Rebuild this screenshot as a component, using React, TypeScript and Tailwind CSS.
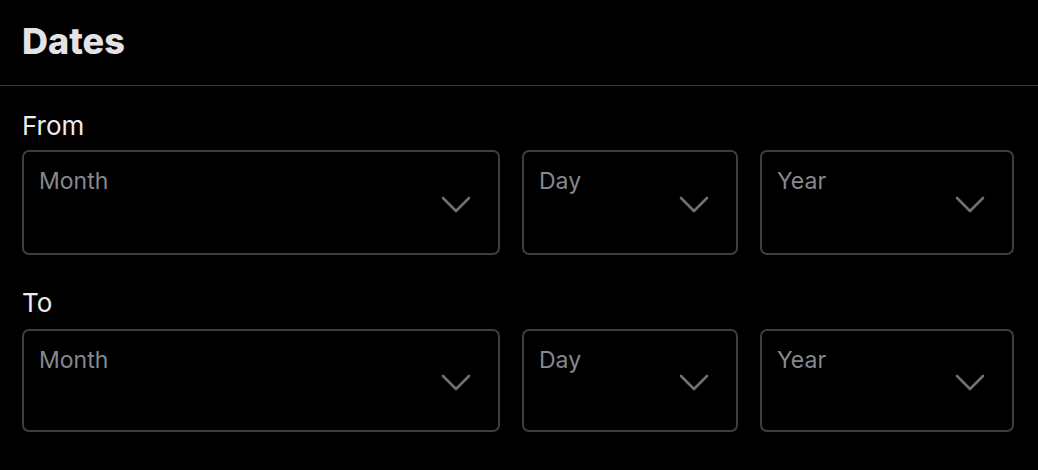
const fields = [
  { label: "Month", width: "w-[478px]" },
  { label: "Day", width: "w-[216px]" },
  { label: "Year", width: "w-[254px]" },
]

function Chevron() {
  return (
    <svg width="30" height="18" viewBox="0 0 30 18" fill="none" className="shrink-0">
      <polyline
        points="2,2 15,15 28,2"
        stroke="#6d7177"
        strokeWidth="2.6"
        strokeLinecap="round"
        strokeLinejoin="round"
      />
    </svg>
  )
}

function DateRow({ label, height, gap }: { label: string; height: string; gap: string }) {
  return (
    <div>
      <div className="text-[26px] leading-none text-[#ececee] pl-[22px]">{label}</div>
      <div className={`flex gap-[22px] pl-[22px] ${gap}`}>
        {fields.map((f) => (
          <div
            key={f.label}
            className={`${f.width} ${height} border-2 border-[#3c3e42] rounded-[7px] flex items-center justify-between pl-[15px] pr-[27px]`}
          >
            <span className="self-start mt-[18px] text-[23px] leading-none text-[#85888e]">{f.label}</span>
            <div className="mt-[4px]">
              <Chevron />
            </div>
          </div>
        ))}
      </div>
    </div>
  )
}

export default function App() {
  return (
    <div className="w-[1038px] h-[470px] bg-black font-['Inter',sans-serif] overflow-hidden">
      <div className="h-[86px] border-b border-[#3a3a3d] pt-[23px] pl-[22px]">
        <h2 className="text-[36px] leading-none font-extrabold text-[#e3e3e5]">Dates</h2>
      </div>
      <div className="pt-[27px]">
        <DateRow label="From" height="h-[105px]" gap="mt-[11px]" />
        <div className="mt-[35px]">
          <DateRow label="To" height="h-[103px]" gap="mt-[13px]" />
        </div>
      </div>
    </div>
  )
}
